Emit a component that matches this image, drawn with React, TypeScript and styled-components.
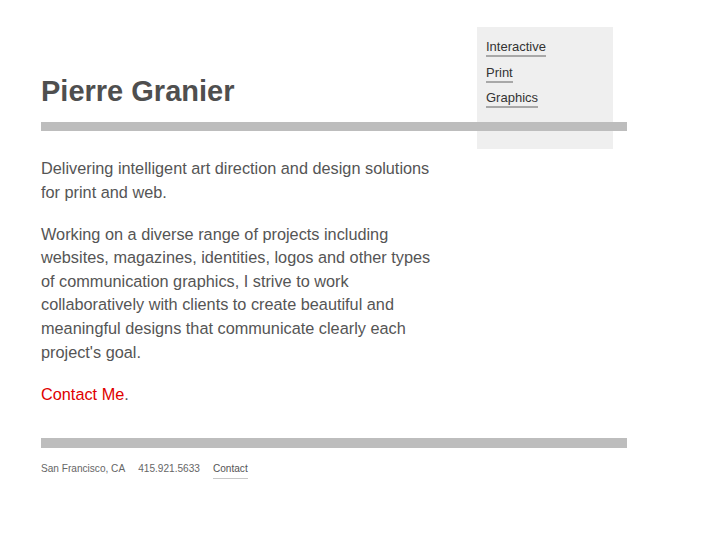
import React from "react";
import styled, { createGlobalStyle } from "styled-components";

const Global = createGlobalStyle`
  html, body { margin: 0; padding: 0; background: #fff; }
  body { font-family: "Liberation Sans", Arial, Helvetica, sans-serif; color: #555; }
`;

const Page = styled.div`
  padding: 27px 0 0 41px;
  width: 586px;
`;

const Masthead = styled.header`
  display: grid;
  grid-template-columns: 436px 136px 14px;
  grid-template-rows: 95px 9px 18px;
`;

const Title = styled.h1`
  grid-column: 1;
  grid-row: 1;
  align-self: end;
  margin: 0 0 16.5px;
  font-size: 29px;
  line-height: 29px;
  font-weight: bold;
  color: #4f4f4f;
  letter-spacing: 0;
`;

const NavBox = styled.nav`
  grid-column: 2;
  grid-row: 1 / 4;
  background: #efefef;
  display: flex;
  flex-direction: column;
  align-items: flex-start;
  gap: 7.5px;
  padding: 12px 0 0 9px;
`;

const NavLink = styled.a`
  font-size: 13px;
  line-height: 15px;
  color: #333;
  text-decoration: none;
  padding-bottom: 1px;
  border-bottom: 2px solid #a8a8a8;
`;

const Rule = styled.div<{ $thick?: number }>`
  grid-column: 1 / 4;
  grid-row: 2;
  height: ${(p) => p.$thick ?? 9}px;
  background: #bdbdbd;
  position: relative;
  z-index: 1;
`;

const Intro = styled.section`
  width: 400px;
  padding-top: 8px;
`;

const Para = styled.p`
  margin: 0 0 18.4px;
  font-size: 16.3px;
  line-height: 23.6px;
  color: #555;
`;

const Red = styled.a`
  color: #e00000;
  text-decoration: none;
`;

const Footer = styled.footer`
  margin-top: 32px;
`;

const FootBar = styled.div`
  height: 10px;
  background: #bdbdbd;
`;

const FootLine = styled.div`
  display: flex;
  gap: 13px;
  padding-top: 14px;
  font-size: 10.1px;
  line-height: 13px;
  color: #666;
`;

const FootLink = styled.a`
  color: #555;
  text-decoration: none;
  padding-bottom: 3px;
  border-bottom: 1px solid #c8c8c8;
`;

export default function App() {
  return (
    <>
      <Global />
      <Page>
        <Masthead>
          <Title>Pierre Granier</Title>
          <NavBox>
            <NavLink href="#">Interactive</NavLink>
            <NavLink href="#">Print</NavLink>
            <NavLink href="#">Graphics</NavLink>
          </NavBox>
          <Rule />
        </Masthead>
        <Intro>
          <Para>Delivering intelligent art direction and design solutions for print and web.</Para>
          <Para>
            Working on a diverse range of projects including websites, magazines, identities, logos and
            other types of communication graphics, I strive to work collaboratively with clients to create
            beautiful and meaningful designs that communicate clearly each project's goal.
          </Para>
          <Para>
            <Red href="#">Contact Me</Red>.
          </Para>
        </Intro>
        <Footer>
          <FootBar />
          <FootLine>
            <span>San Francisco, CA</span>
            <span>415.921.5633</span>
            <FootLink href="#">Contact</FootLink>
          </FootLine>
        </Footer>
      </Page>
    </>
  );
}
